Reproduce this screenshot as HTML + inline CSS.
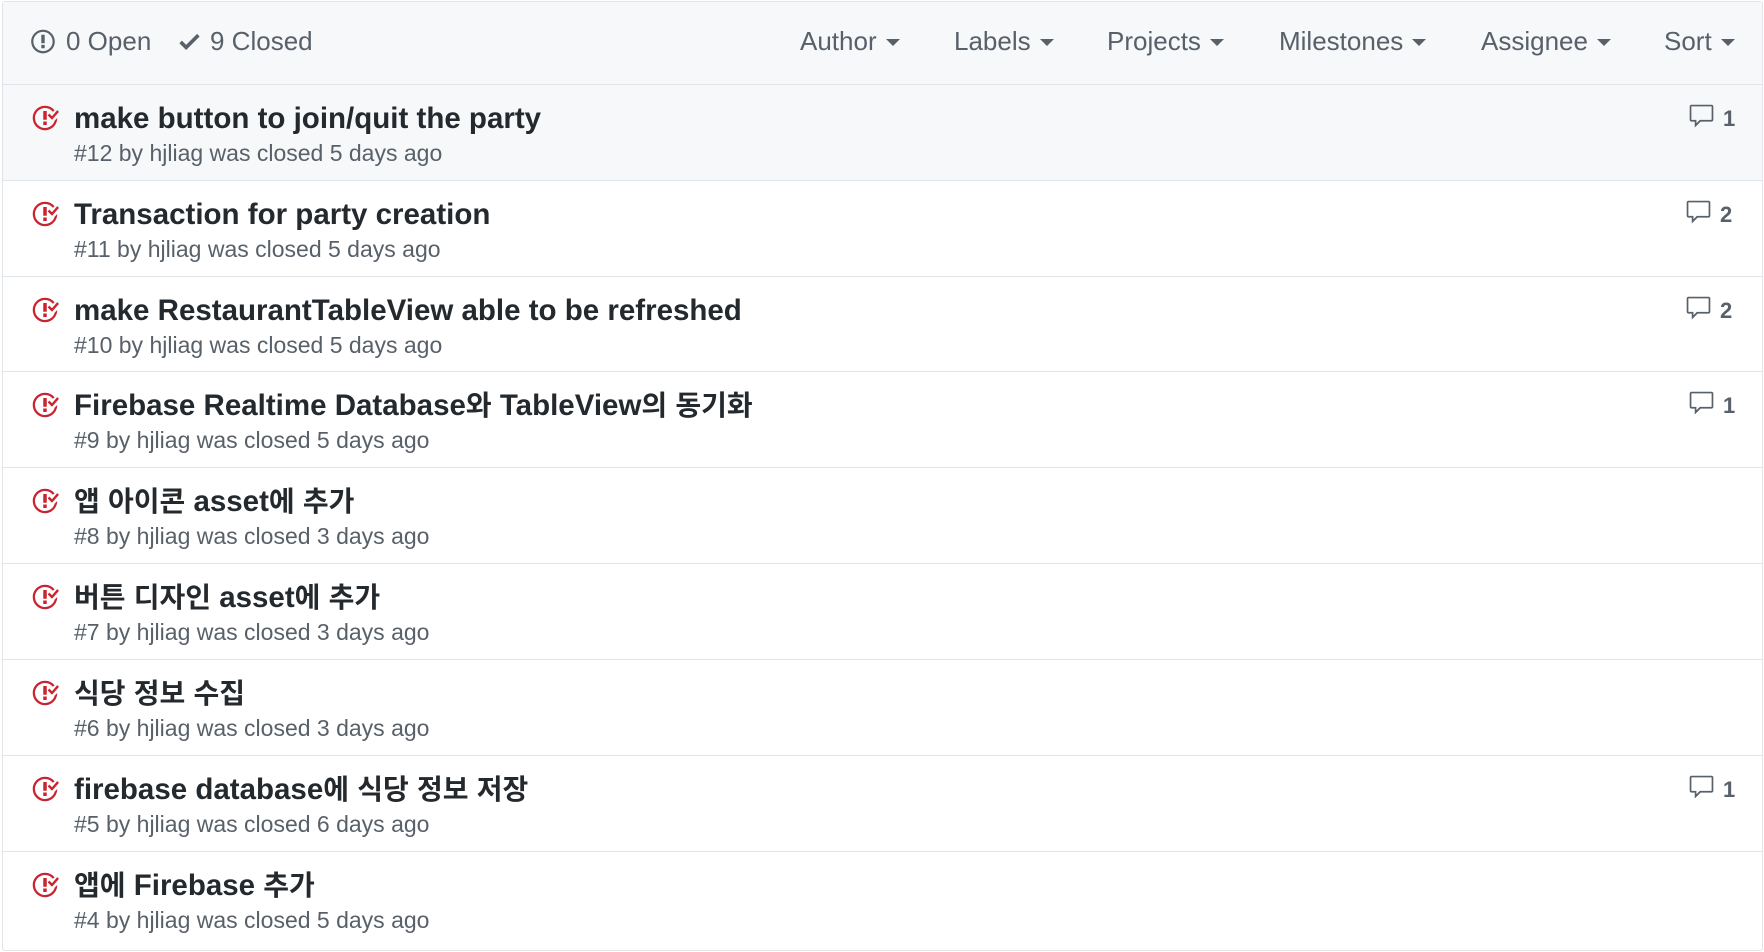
<!DOCTYPE html>
<html><head><meta charset="utf-8"><style>
*{margin:0;padding:0;box-sizing:border-box}
body{width:1764px;height:952px;background:#fff;font-family:"Liberation Sans","Noto Sans CJK KR",sans-serif;position:relative;overflow:hidden}
.box{position:absolute;left:2px;top:1px;width:1761px;height:950px;border:1px solid #e1e4e8;border-radius:3px}
.hdr{position:absolute;left:0;top:0;width:100%;height:83px;background:#f6f8fa;border-bottom:1px solid #e1e4e8}
.t{position:absolute;font-size:26px;color:#586069;line-height:30px;top:24px;white-space:nowrap}
.f{position:absolute;font-size:26px;color:#586069;line-height:30px;top:24px;white-space:nowrap}
.f:after{content:"";display:inline-block;border-left:7px solid transparent;border-right:7px solid transparent;border-top:7px solid #586069;margin-left:9px;vertical-align:4px}
.row{position:absolute;left:0;width:100%;border-bottom:1px solid #e1e4e8}
.row svg.ic{position:absolute;left:28px;top:19px}
.ti{position:absolute;left:71px;top:17px;font-size:29.5px;font-weight:bold;color:#24292e;white-space:nowrap;line-height:34px}
.ti .k{font-size:28px}
.su{position:absolute;left:71px;top:54px;font-size:23px;color:#586069;white-space:nowrap;line-height:28px}
.cm{position:absolute;top:18px;font-size:22px;font-weight:bold;color:#586069;line-height:26px;white-space:nowrap}
.cm svg{vertical-align:-4px;margin-right:8px}
</style></head><body>
<div class="box">
<div class="hdr">
<div class="t" style="left:28px"><svg width="24" height="27" viewBox="0 0 14 16" style="vertical-align:-5px;margin-right:11px"><path fill="#586069" d="M7 2.3c3.14 0 5.7 2.560 5.7 5.7s-2.56 5.7-5.7 5.7A5.71 5.71 0 0 1 1.3 8c0-3.14 2.56-5.7 5.7-5.7zM7 1C3.14 1 0 4.14 0 8s3.14 7 7 7 7-3.14 7-7-3.14-7-7-7zm1 3H6v5h2V4zm0 6H6v2h2v-2z"/></svg>0 Open</div>
<div class="t" style="left:176px"><svg width="21" height="27" viewBox="0 0 12 16" style="vertical-align:-5px;margin-right:10px"><path fill="#586069" d="M12 5l-8 8-4-4 1.5-1.5L4 10l6.5-6.5L12 5z"/></svg>9 Closed</div>
<div class="f" style="left:797px">Author</div>
<div class="f" style="left:951px">Labels</div>
<div class="f" style="left:1104px">Projects</div>
<div class="f" style="left:1276px">Milestones</div>
<div class="f" style="left:1478px">Assignee</div>
<div class="f" style="left:1661px">Sort</div>
</div>
</div>
<div id="rows"></div>
<script>
var d=[["make button to join/quit the party","#12","5",1,1],["Transaction for party creation","#11","5",2,0],["make RestaurantTableView able to be refreshed","#10","5",2,0],["Firebase Realtime Database와 TableView의 동기화","#9","5",1,0],["앱 아이콘 asset에 추가","#8","3",0,0],["버튼 디자인 asset에 추가","#7","3",0,0],["식당 정보 수집","#6","3",0,0],["firebase database에 식당 정보 저장","#5","6",1,0],["앱에 Firebase 추가","#4","5",0,0]];
var tops=[85,181,277,372,468,564,660,756,852];
function kr(s){return s.replace(/([\uAC00-\uD7A3]+)/g,'<span class="k">$1</span>');}
var h="";
for(var i=0;i<d.length;i++){var r=d[i];var ht=(i<8?tops[i+1]:951)-tops[i];
h+='<div class="row" style="left:3px;width:1759px;top:'+tops[i]+'px;height:'+ht+'px;'+(r[4]?'background:#f6f8fa;':'')+(i==8?'border-bottom:none;':'')+'"><svg class="ic" width="28" height="28" viewBox="0 0 16 16"><path fill="#cb2431" d="M7 10h2v2H7v-2zm2-6H7v5h2V4zm1.5 1.5l-1 1L12 9l4-4.5-1-1L12 7l-1.5-1.5zM8 13.7A5.71 5.71 0 0 1 2.3 8c0-3.14 2.56-5.7 5.7-5.7 1.830 0 3.45.88 4.5 2.2l.92-.92A6.947 6.947 0 0 0 8 1C4.14 1 1 4.14 1 8s3.14 7 7 7 7-3.14 7-7l-1.48 1.48A5.708 5.708 0 0 1 8 13.71v-.01z"/></svg><div class="ti">'+kr(r[0])+'</div><div class="su">'+r[1]+' by hjliag was closed '+r[2]+' days ago</div>'+(r[3]?'<div class="cm" style="left:'+(r[3]==2?1682:1685)+'px"><svg width="27" height="27" viewBox="0 0 16 16"><path fill="#586069" d="M14 1H2c-.55 0-1 .45-1 1v8c0 .55.45 1 1 1h2v3.5L7.5 11H14c.55 0 1-.45 1-1V2c0-.55-.45-1-1-1zm0 9H7l-2 2v-2H2V2h12v8z"/></svg>'+r[3]+'</div>':'')+'</div>';}
document.getElementById("rows").innerHTML=h;
</script>
</body></html>
